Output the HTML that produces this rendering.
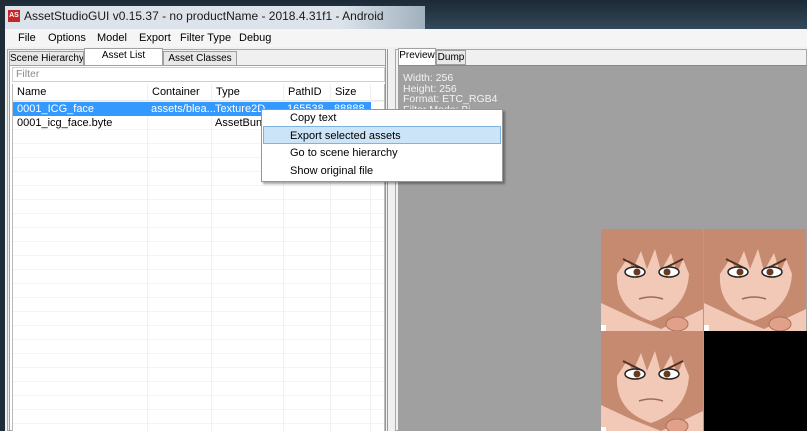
<!DOCTYPE html>
<html><head><meta charset="utf-8"><style>
*{margin:0;padding:0;box-sizing:border-box}
body{width:807px;height:431px;overflow:hidden;position:relative;background:#f0f0f0;font-family:"Liberation Sans",sans-serif;font-size:11px;color:#000}
.a{position:absolute}
.menu span{position:absolute;top:32px;font-size:11px}
.tab{position:absolute;border:1px solid #a0a0a0;background:#e8e8e8;text-align:center;font-size:10px;line-height:14px;white-space:nowrap;overflow:hidden}
.row{position:absolute;left:13px;width:358px;height:14px;line-height:14px;white-space:nowrap}
.row span{position:absolute;padding-left:4px}
.hl{position:absolute;top:84px;height:16px;line-height:16px}
</style></head><body>
<div class="a" style="left:0;top:0;width:807px;height:29px;background:linear-gradient(#1c2a36,#2a3c4a 60%,#34495a)"></div>
<div class="a" style="left:5px;top:6px;width:420px;height:23px;background:linear-gradient(90deg,#dce3ea 80%,#9fb0bd)"></div>
<div class="a" style="left:0;top:0;width:5px;height:431px;background:#1f2d39"></div>
<div class="a" style="left:8px;top:10px;width:12px;height:12px;background:#c0282a;color:#fff;font-size:7px;font-weight:bold;line-height:12px;text-align:center">AS</div>
<div class="a" style="left:24px;top:9px;font-size:12px;color:#1a1a1a">AssetStudioGUI v0.15.37 - no productName - 2018.4.31f1 - Android</div>
<div class="a" style="left:5px;top:29px;width:802px;height:18px;background:#f5f5f5"></div>
<div class="menu"><span style="left:18px">File</span><span style="left:48px">Options</span><span style="left:97px">Model</span><span style="left:139px">Export</span><span style="left:180px">Filter Type</span><span style="left:239px">Debug</span></div>
<div class="a" style="left:7px;top:49px;width:383px;height:382px;border:1px solid #a8a8a8;background:#f0f0f0"></div>
<div class="tab" style="left:9px;top:51px;width:75px;height:15px">Scene Hierarchy</div>
<div class="tab" style="left:84px;top:48px;width:79px;height:18px;background:#fff;border-bottom:none">Asset List</div>
<div class="tab" style="left:163px;top:51px;width:74px;height:15px">Asset Classes</div>
<div class="a" style="left:9px;top:65px;width:379px;height:366px;background:#fff;border:1px solid #a0a0a0"></div>
<div class="a" style="left:12px;top:67px;width:373px;height:15px;border:1px solid #d0d0d0;color:#8a8a8a;padding-left:3px;line-height:13px;font-size:10.5px">Filter</div>
<div class="a" style="left:12px;top:84px;width:373px;height:347px;border-left:1px solid #bbb;border-right:1px solid #bbb;
background:#fff repeating-linear-gradient(to bottom,transparent 0,transparent 13px,#f3f3f3 13px,#f3f3f3 14px);background-position:0 4px"></div>
<div class="a" style="left:13px;top:84px;width:371px;height:17px;background:#fff;border-bottom:1px solid #e6e6e6"></div>
<div class="a" style="left:147px;top:84px;width:1px;height:347px;background:#f0f0f0"></div>
<div class="a" style="left:211px;top:84px;width:1px;height:347px;background:#f0f0f0"></div>
<div class="a" style="left:283px;top:84px;width:1px;height:347px;background:#f0f0f0"></div>
<div class="a" style="left:330px;top:84px;width:1px;height:347px;background:#f0f0f0"></div>
<div class="a" style="left:370px;top:84px;width:1px;height:347px;background:#f0f0f0"></div>
<span class="a hl" style="left:17px">Name</span><span class="a hl" style="left:152px">Container</span><span class="a hl" style="left:216px">Type</span><span class="a hl" style="left:288px">PathID</span><span class="a hl" style="left:335px">Size</span>
<div class="row" style="top:102px;background:#3399ff;color:#fff"><span style="left:0">0001_ICG_face</span><span style="left:134px">assets/blea...</span><span style="left:198px">Texture2D</span><span style="left:270px">165538</span><span style="left:317px">88888</span></div>
<div class="row" style="top:116px"><span style="left:0">0001_icg_face.byte</span><span style="left:198px">AssetBundle</span></div>
<div class="a" style="left:385px;top:49px;width:13px;height:382px;background:#f0f0f0;border-left:3px double #999;border-right:3px double #888"></div>
<div class="a" style="left:395px;top:49px;width:412px;height:382px;border:1px solid #a8a8a8;background:#f0f0f0"></div>
<div class="tab" style="left:398px;top:48px;width:38px;height:17px;background:#fff;border-bottom:none">Preview</div>
<div class="tab" style="left:436px;top:50px;width:30px;height:15px">Dump</div>
<div class="a" style="left:398px;top:65px;width:409px;height:366px;background:#a0a0a0;border-top:1px solid #888"></div>
<div class="a" style="left:403px;top:73px;color:#f2f2f2;font-size:10.5px;line-height:10.5px">Width: 256<br>Height: 256<br>Format: ETC_RGB4<br>Filter Mode: Bi</div>
<svg class="a" style="left:601px;top:229px" width="206" height="202" viewBox="0 0 206 202">
<defs><g id="f">
<rect width="102" height="102" fill="#c68a70"/>
<path d="M0 74 L30 88 L60 100 L102 80 L102 102 L0 102Z" fill="#f1c9b6"/>
<path d="M16 45 Q14 80 50 92 Q86 80 88 45 L82 30 L76 44 L70 24 L60 42 L54 20 L46 40 L40 22 L32 40 L26 30 Z" fill="#f1c9b6"/>
<path d="M22 30 L42 40 M82 30 L62 40" stroke="#5a3020" stroke-width="2"/>
<ellipse cx="34" cy="43" rx="10" ry="5" fill="#fff" stroke="#222" stroke-width="1.5"/>
<ellipse cx="68" cy="43" rx="10" ry="5" fill="#fff" stroke="#222" stroke-width="1.5"/>
<circle cx="36" cy="43" r="3.5" fill="#6a3a20"/><circle cx="66" cy="43" r="3.5" fill="#6a3a20"/>
<path d="M38 70 Q50 66 62 70" stroke="#a06a5a" stroke-width="1.5" fill="none"/>
<ellipse cx="76" cy="95" rx="11" ry="7" fill="#e0a08a" stroke="#b0705a"/>
<rect x="0" y="96" width="5" height="6" fill="#fff"/>
</g></defs>
<use href="#f"/><use href="#f" x="103"/><use href="#f" y="102"/>
<rect x="103" y="102" width="103" height="100" fill="#000"/>
</svg>
<div class="a" style="left:261px;top:109px;width:242px;height:73px;background:#fff;border:1px solid #979797;box-shadow:2px 2px 2px rgba(0,0,0,.35)"></div>
<div class="a" style="left:263px;top:126px;width:238px;height:18px;background:#cce4f7;border:1px solid #7fb4e0"></div>
<div class="a" style="left:290px;top:110px;line-height:17.5px;font-size:11px">Copy text<br>Export selected assets<br>Go to scene hierarchy<br>Show original file</div>
</body></html>
